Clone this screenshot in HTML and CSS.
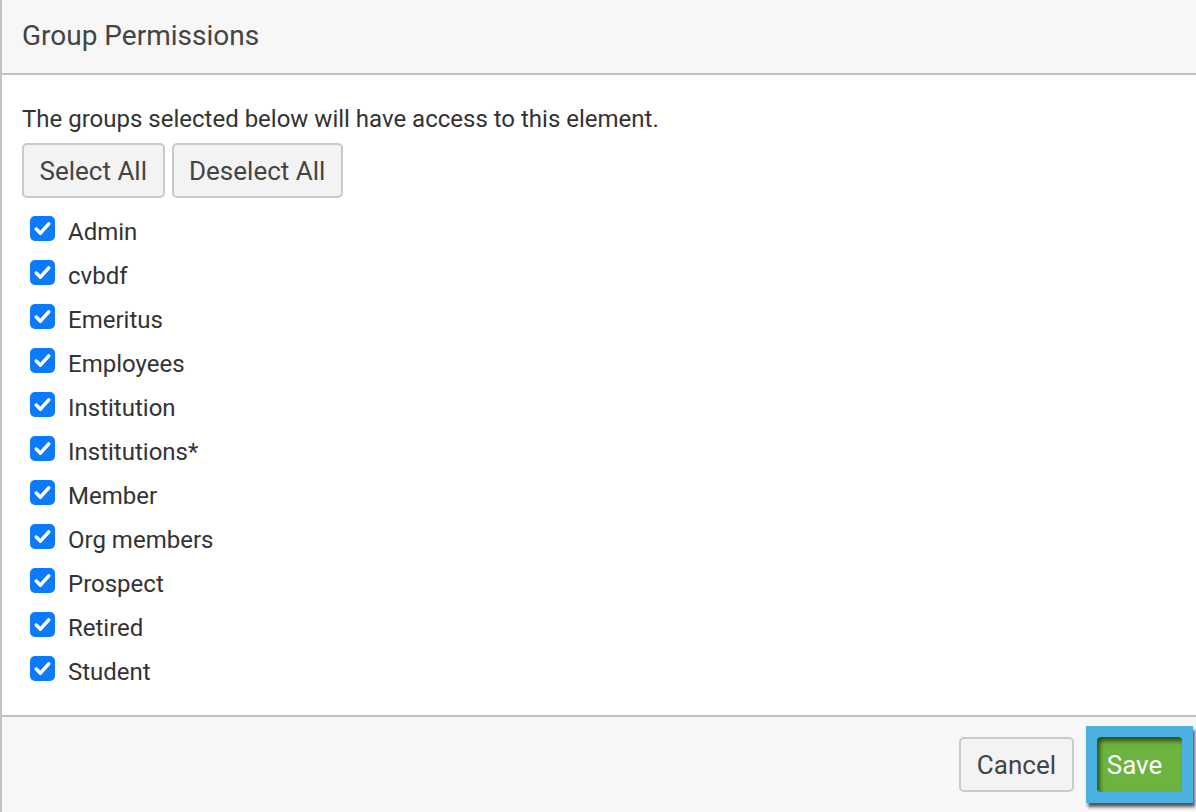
FILE: index.html
```html
<!DOCTYPE html>
<html lang="en">
<head>
  <meta charset="UTF-8" />
  <title>Group Permissions</title>
  <link rel="stylesheet" href="styles.css">
</head>
<body>
  <div class="modal">
    <div class="modal-header">
      <h2>Group Permissions</h2>
    </div>
    <div class="modal-body">
      <p class="intro">The groups selected below will have access to this element.</p>
      <div class="toolbar">
        <button type="button" class="btn">Select All</button>
        <button type="button" class="btn">Deselect All</button>
      </div>
      <ul class="groups">
        <li><span class="check"><svg viewBox="0 0 24 24"><path d="M6 12.5l4 4 8-9" /></svg></span>Admin</li>
        <li><span class="check"><svg viewBox="0 0 24 24"><path d="M6 12.5l4 4 8-9" /></svg></span>cvbdf</li>
        <li><span class="check"><svg viewBox="0 0 24 24"><path d="M6 12.5l4 4 8-9" /></svg></span>Emeritus</li>
        <li><span class="check"><svg viewBox="0 0 24 24"><path d="M6 12.5l4 4 8-9" /></svg></span>Employees</li>
        <li><span class="check"><svg viewBox="0 0 24 24"><path d="M6 12.5l4 4 8-9" /></svg></span>Institution</li>
        <li><span class="check"><svg viewBox="0 0 24 24"><path d="M6 12.5l4 4 8-9" /></svg></span>Institutions*</li>
        <li><span class="check"><svg viewBox="0 0 24 24"><path d="M6 12.5l4 4 8-9" /></svg></span>Member</li>
        <li><span class="check"><svg viewBox="0 0 24 24"><path d="M6 12.5l4 4 8-9" /></svg></span>Org members</li>
        <li><span class="check"><svg viewBox="0 0 24 24"><path d="M6 12.5l4 4 8-9" /></svg></span>Prospect</li>
        <li><span class="check"><svg viewBox="0 0 24 24"><path d="M6 12.5l4 4 8-9" /></svg></span>Retired</li>
        <li><span class="check"><svg viewBox="0 0 24 24"><path d="M6 12.5l4 4 8-9" /></svg></span>Student</li>
      </ul>
    </div>
    <div class="modal-footer">
      <button type="button" class="btn btn-cancel">Cancel</button>
      <span class="focus-ring"><button type="button" class="btn btn-save">Save</button></span>
    </div>
  </div>
</body>
</html>
```

FILE: styles.css
```css
body {
  margin: 0;
  font-family: Roboto, "Liberation Sans", sans-serif;
  color: #333;
  background-color: #fff;
}
.modal {
  border-left: 2px solid #c2c2c2;
  height: 812px;
  box-sizing: border-box;
  display: flex;
  flex-direction: column;
}
.modal-header {
  background-color: #f7f7f7;
  border-bottom: 2px solid #c2c2c2;
  height: 75px;
  box-sizing: border-box;
  padding: 0 20px;
  display: flex;
  align-items: center;
}
.modal-header h2 {
  margin: 0 0 2px;
  font-size: 28px;
  font-weight: 400;
  color: #444;
}
.modal-body {
  padding: 29px 20px 0;
  height: 642px;
  box-sizing: border-box;
  border-bottom: 2px solid #c2c2c2;
}
.intro {
  margin: 0 0 9px;
  font-size: 24px;
  line-height: 30px;
  color: #333;
}
.toolbar {
  display: flex;
  gap: 7px;
}
.btn {
  font-family: Roboto, "Liberation Sans", sans-serif;
  font-size: 26px;
  color: #444;
  background-color: #f3f3f3;
  border: 2px solid #cacaca;
  border-radius: 5px;
  height: 55px;
  padding: 0 15.5px;
  cursor: pointer;
}
.groups {
  list-style: none;
  margin: 12px 0 0;
  padding: 0 0 0 8px;
}
.groups li {
  display: flex;
  align-items: center;
  height: 44px;
  font-size: 24px;
  color: #333;
}
.check {
  width: 25px;
  height: 25px;
  border-radius: 5px;
  background-color: #0a7aff;
  margin: -8px 13px 0 0;
  display: flex;
}
.check svg {
  width: 25px;
  height: 25px;
  fill: none;
  stroke: #fff;
  stroke-width: 3.4;
  stroke-linecap: round;
  stroke-linejoin: round;
}
.modal-footer {
  flex: 1;
  background-color: #f7f7f7;
  display: flex;
  justify-content: flex-end;
  align-items: center;
  gap: 12px;
  padding: 0 3px 0 0;
}
.btn-cancel {
  padding: 0 16px;
}
.focus-ring {
  display: flex;
  padding: 11px;
  background-color: #4bb1e1;
  box-shadow: 2px 4px 3px rgba(0, 0, 0, 0.65);
}
.btn-save {
  background-color: #6db33f;
  border: none;
  border-radius: 4px;
  color: #fff;
  width: 85px;
  padding: 0 10px 0 0;
  font-size: 26px;
  box-shadow: inset 3px 4px 4px rgba(0, 0, 0, 0.55);
}
```
